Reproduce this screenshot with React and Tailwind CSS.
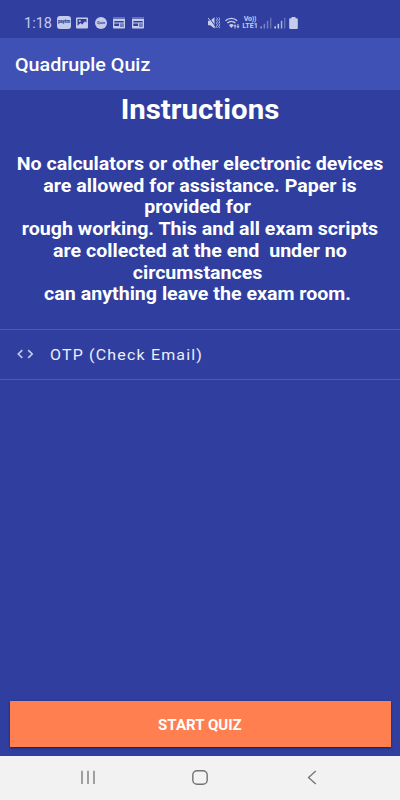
import { Fragment } from 'react';

const instructions = [
  'No calculators or other electronic devices',
  'are allowed for assistance. Paper is',
  'provided for ',
  'rough working. This and all exam scripts',
  'are collected at the end  under no',
  'circumstances ',
  'can anything leave the exam room. ',
];

function NewsIcon() {
  return (
    <svg className="w-3 h-3" viewBox="0 0 12 12" fill="currentColor">
      <path d="M0 .5h12v1H0z" opacity=".7" />
      <path
        fillRule="evenodd"
        d="M0 2h12v8.700a.8.8 0 0 1-.8.800H.8a.8.8 0 0 1-.8-.800ZM1.300 4v1.400h9.400V4ZM1.300 6.500v2.500h4.700V6.500ZM7 6.500v3.500h3.700V6.500Z"
      />
      <path d="M7 6.500h3.700v3.500H7z" opacity=".45" />
    </svg>
  );
}

function SignalIcon({ dim }) {
  return (
    <svg className="w-3 h-3" viewBox="0 0 12 12" fill="currentColor">
      <path d="M.4 9.300h1.600v2.200H.4z" opacity={dim ? 0.6 : 1} />
      <path d="M3.600 6.800h1.500v4.700H3.600z" opacity={dim ? 0.5 : 1} />
      <path d="M6.800 3.800h1.500v7.700H6.800z" opacity={dim ? 0.45 : 0.8} />
      <path d="M10 .8h1.400v10.700H10z" opacity=".35" />
    </svg>
  );
}

function StatusBar() {
  return (
    <div className="flex h-[38px] items-center pt-[7px] pl-6 text-[#c5cbeb]">
      <span className="w-[33px] pt-[3px] text-[14.500px] leading-none whitespace-nowrap">1:18</span>
      <div className="flex h-[13px] w-[14px] items-center justify-center rounded-[3px] bg-[#c5cbeb] text-[4.500px] leading-none font-black tracking-tight text-[#303f9f]">
        paytm
      </div>
      <svg className="ml-[5px] w-3 h-3" viewBox="0 0 12 12" fill="currentColor">
        <path
          fillRule="evenodd"
          d="M1 .5h10a1 1 0 0 1 1 1v9a1 1 0 0 1-1 1H1a1 1 0 0 1-1-1v-9a1 1 0 0 1 1-1ZM1.500 2v6.800L4.500 6l1.700 1.400L9 4.300l1.500 1.500V2Z"
        />
        <circle cx="3.800" cy="3.900" r="1" />
      </svg>
      <div className="ml-[7px] flex h-3 w-3 items-center justify-center rounded-full bg-[#c5cbeb] text-[4px] leading-none font-bold text-[#303f9f]">
        Quiz
      </div>
      <div className="ml-1.5 flex gap-[7px]">
        <NewsIcon />
        <NewsIcon />
      </div>
      <svg className="ml-[64px] w-3 h-3" viewBox="0 0 12 12" fill="currentColor">
        <path d="M0 3.800h2.200L6.500.3v11.200L2.200 8.200H0z" />
        <path d="M.8.2l6.500 9" stroke="#303f9f" strokeWidth="1" />
        <path d="M0 .8l7.300 10" stroke="currentColor" strokeWidth=".9" />
        <path
          d="M8.700.5l.8 1.300-1 1.500 1 1.500-1 1.500 1 1.500-1 1.500.8 1.700M11 .5l.8 1.300-1 1.500 1 1.500-1 1.500 1 1.500-1 1.500.8 1.700"
          fill="none"
          stroke="currentColor"
          strokeWidth=".9"
        />
      </svg>
      <svg className="ml-[5px] w-[15px] h-3" viewBox="0 0 15 12" fill="none" stroke="currentColor">
        <path d="M.5 3.800C3.700.5 9 .5 12.200 3.800M2.400 6c2.200-2.300 5.800-2.300 8 0" strokeWidth="1.300" />
        <path d="M4 8.200c1.200-1.500 3.600-1.500 4.800 0L6.400 11z" fill="currentColor" stroke="none" />
        <path d="M8.500 9.200 10 7.200l1.500 2h-1v2.300h-1V9.200zM11.500 9.200h1V7h1v2.200h1L13 11.500z" fill="currentColor" stroke="none" />
      </svg>
      <div className="ml-0.5 flex w-[16px] scale-x-110 flex-col items-center text-[6.500px] leading-[6.500px] font-bold">
        <span className="h-[6.500px] overflow-hidden tracking-[-0.200px]">Vo))</span>
        <span className="h-[6.500px] overflow-hidden">LTE1</span>
      </div>
      <div className="ml-0.5 flex gap-0.5">
        <SignalIcon dim />
        <SignalIcon />
      </div>
      <svg className="ml-[3px] w-[9px] h-3" viewBox="0 0 9 12" fill="currentColor">
        <path d="M2.500 0h4v1.300h1.300a1 1 0 0 1 1 1V11a1 1 0 0 1-1 1H1.200a1 1 0 0 1-1-1V2.300a1 1 0 0 1 1-1h1.300z" />
      </svg>
    </div>
  );
}

function NavBar() {
  return (
    <nav className="flex h-11 items-center justify-between bg-[#f2f2f2] px-20 text-[#737373]">
      <svg className="w-4 h-4" viewBox="0 0 16 16" stroke="currentColor" strokeWidth="1.300">
        <path d="M2 .8v13.200M8 .8v13.200M14 .8v13.200" />
      </svg>
      <svg className="w-4 h-4" viewBox="0 0 16 16" fill="none" stroke="currentColor" strokeWidth="1.400">
        <rect x=".8" y=".8" width="14.400" height="13.400" rx="4.200" />
      </svg>
      <svg className="w-4 h-4" viewBox="0 0 16 16" fill="none" stroke="currentColor" strokeWidth="1.300">
        <path d="M11.800 1 4.500 7.500l7.300 6.500" />
      </svg>
    </nav>
  );
}

export default function App() {
  return (
    <div className="flex h-[800px] w-[400px] flex-col overflow-hidden bg-[#303f9f] font-['Roboto',sans-serif] text-white">
      <StatusBar />
      <header className="flex h-[52px] items-center bg-[#3f51b5] pl-[15px] text-[18.800px] font-medium">
        <span className="origin-left scale-x-[1.050] pt-[3px]">Quadruple Quiz</span>
      </header>

      <main className="flex flex-1 flex-col">
        <h1 className="scale-x-[1.050] pt-[3px] text-center text-[28px] leading-[34px] font-bold">Instructions</h1>
        <p className="mt-[27px] scale-x-[1.060] text-center text-[18.500px] leading-[21.700px] font-bold whitespace-pre">
          {instructions.map((line, i) => (
            <Fragment key={i}>
              {line}
              <br />
            </Fragment>
          ))}
        </p>

        <div className="mt-[23px] flex h-[51px] items-center border-y border-[#4a5abb] pl-[17px]">
          <svg
            className="w-[17px] h-[10px] text-[#c5cbeb]"
            viewBox="0 0 17 10"
            fill="none"
            stroke="currentColor"
            strokeWidth="1.600"
          >
            <path d="M5.300 1.200 1.300 5l4 3.800M11.200 1.200l4 3.800-4 3.800" />
          </svg>
          <span className="ml-4 origin-left scale-x-[1.030] pt-0.5 text-[15.500px] tracking-[1.150px] text-[#eceefa]">
            OTP (Check Email)
          </span>
        </div>

        <button
          type="button"
          className="mx-[9.500px] mt-auto mb-[9px] h-[46px] bg-[#ff7f50] pt-0.5 text-[14px] font-bold shadow-[0_1px_2px_rgba(0,0,0,0.5)]"
        >
          <span className="inline-block scale-x-[1.075]">START QUIZ</span>
        </button>
      </main>

      <NavBar />
    </div>
  );
}
